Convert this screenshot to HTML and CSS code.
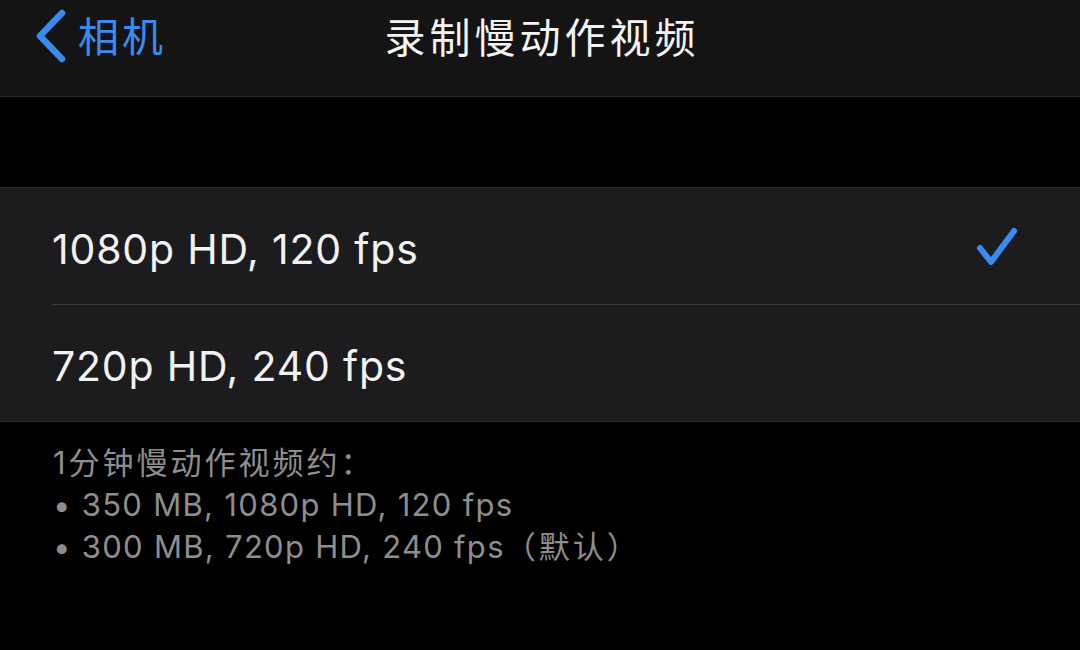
FILE: index.html
```html
<!DOCTYPE html>
<html lang="zh-CN">
<head>
  <meta charset="UTF-8" />
  <meta name="viewport" content="width=device-width, initial-scale=1.0"/>
  <title>录制慢动作视频</title>
  <link rel="stylesheet" href="styles.css">
</head>
<body>
  <div class="navbar">
    <a class="back" href="#">
      <svg class="chevron" width="32" height="56" viewBox="0 0 32 56">
        <path d="M28 4 L6 27 L28 50" fill="none" stroke="#3a8bf0" stroke-width="6.5" stroke-linecap="round" stroke-linejoin="round"/>
      </svg>
      <span>相机</span>
    </a>
    <div class="title">录制慢动作视频</div>
  </div>

  <div class="spacer"></div>

  <div class="group">
    <div class="row">
      <span class="label">1080p HD, 120 fps</span>
      <svg class="check" width="44" height="44" viewBox="0 0 44 44">
        <path d="M6 24 L17 38 L40 7" fill="none" stroke="#3a8bf0" stroke-width="6" stroke-linecap="round" stroke-linejoin="round"/>
      </svg>
    </div>
    <div class="row">
      <span class="label">720p HD, 240 fps</span>
    </div>
  </div>

  <div class="footer">
    <p class="cjk">1分钟慢动作视频约：</p>
    <p>• 350 MB, 1080p HD, 120 fps</p>
    <p>• 300 MB, 720p HD, 240 fps<span class="cjk">（默认）</span></p>
  </div>
</body>
</html>
```

FILE: styles.css
```css
body {
  margin: 0; background: #000; color: #f2f2f2;
  font-family: Inter, "Noto Sans", "Noto Sans CJK SC", sans-serif;
  width: 1080px; height: 650px; overflow: hidden;
}

.navbar {
  position: relative; height: 96px; background: #141414;
  border-bottom: 1px solid #2a2a2a;
  display: flex; align-items: center; justify-content: center;
}
.back {
  position: absolute; left: 34px; top: 9px;
  display: flex; align-items: center; gap: 12px;
  color: #3a8bf0; text-decoration: none; font-size: 41px;
  font-family: "Noto Sans CJK SC", sans-serif; letter-spacing: 3px;
}
.back span { margin-top: -6px; }
.title {
  font-size: 41px; color: #f4f4f4; margin-top: -26px; margin-left: 4px;
  font-family: "Noto Sans CJK SC", sans-serif; letter-spacing: 4px;
}

.spacer { height: 90px; }

.group {
  background: #1c1c1e;
  border-top: 1px solid #2c2c2e; border-bottom: 1px solid #2c2c2e;
}
.row {
  height: 116px; margin-left: 52px; padding-right: 62px;
  display: flex; align-items: center; justify-content: space-between;
}
.row + .row { border-top: 1px solid #3a3a3c; }
.label { font-size: 41px; letter-spacing: 0.8px; margin-top: 6px; }

.footer {
  padding: 20px 0 0 53px; color: #8e8e8e; font-size: 31px;
  letter-spacing: 1.3px;
}
.footer p { margin: 0; line-height: 42px; }
.footer .cjk { letter-spacing: 3px; font-family: Inter, "Noto Sans CJK SC", sans-serif; }
```
